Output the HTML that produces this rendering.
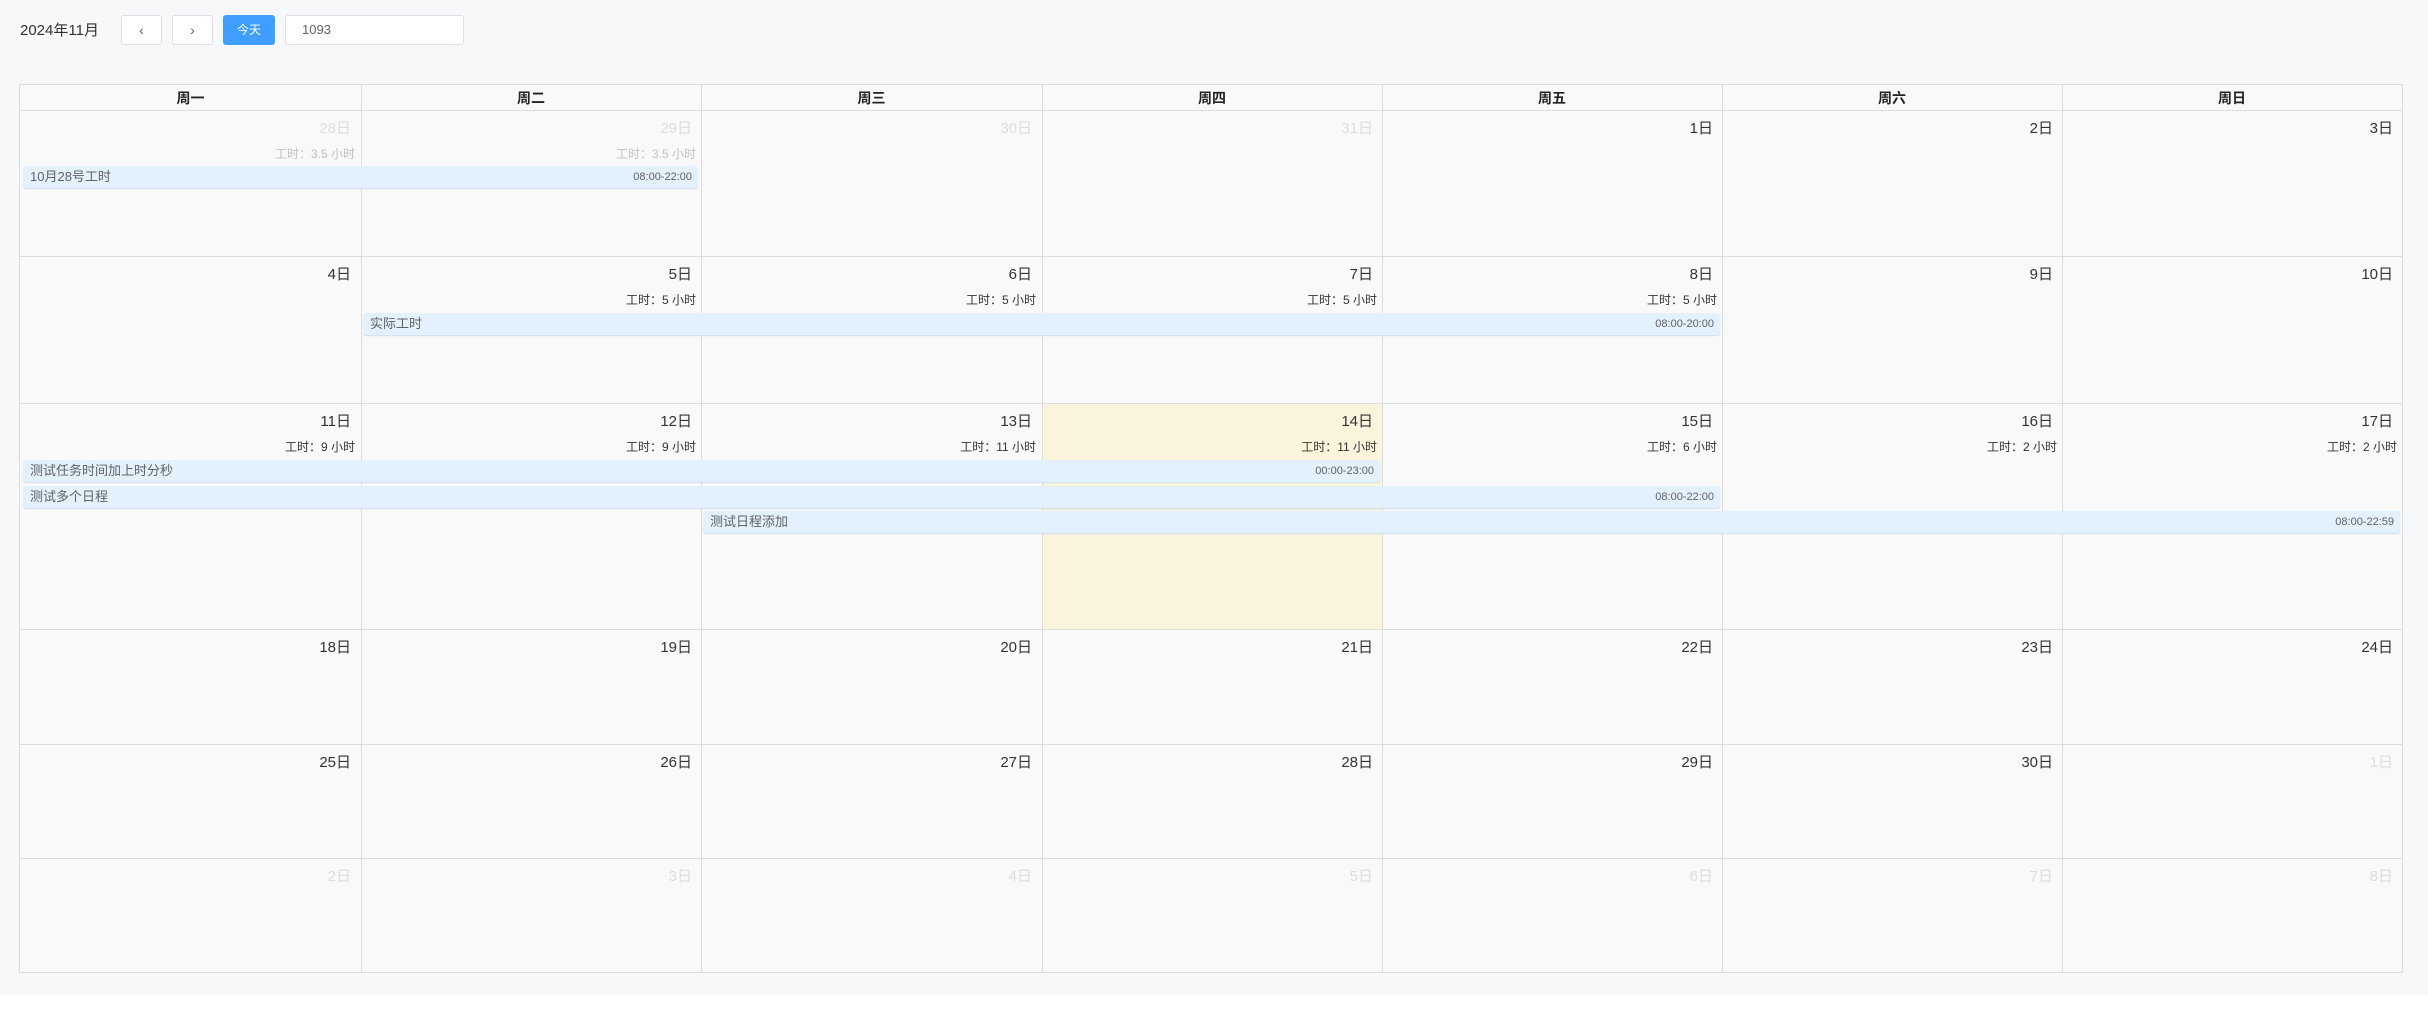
<!DOCTYPE html>
<html><head><meta charset="utf-8"><style>
*{margin:0;padding:0;box-sizing:border-box}
body{width:2428px;height:1017px;background:#fff;font-family:"Liberation Sans","Noto Sans CJK SC",sans-serif;position:relative;overflow:hidden}
#bg{position:absolute;left:0;top:0;width:2428px;height:995px;background:#f7f8fa}
.t{position:absolute;left:20px;top:19px;font-size:15px;color:#303133}
.btn{position:absolute;top:15px;height:30px;border:1px solid #dcdfe6;border-radius:3px;background:#fff;color:#606266;font-size:14px;text-align:center;line-height:28px}
.grid{position:absolute;left:19px;top:84px;width:2384px;height:889px;border:1px solid #dcdcdc;background:#f9f9f9}
.vl{position:absolute;top:0;width:1px;height:100%;background:#dcdcdc}
.hl{position:absolute;left:0;height:1px;width:100%;background:#dcdcdc}
.hd{position:absolute;top:0;height:26px;line-height:26px;text-align:center;font-size:14px;font-weight:bold;color:#222}
.d{position:absolute;font-size:15px;color:#333;text-align:right;width:330px}
.g{color:#ddd}
.w{position:absolute;font-size:12px;color:#333;text-align:right;width:330px}
.wg{color:#c0c0c0}
.ev{position:absolute;height:22px;background:#e3f0fd;border-radius:3px;box-shadow:0 1px 1px #cfdcee;font-size:13px;color:#606266;line-height:22px;padding:0 7px}
.ev span{position:absolute;right:6px;top:0;font-size:11px}
</style></head><body>
<div id="bg"></div>
<div class="t">2024年11月</div>
<div class="btn" style="left:121px;width:41px">‹</div>
<div class="btn" style="left:172px;width:41px">›</div>
<div class="btn" style="left:223px;width:52px;background:#409eff;border-color:#409eff;color:#fff;font-size:12px">今天</div>
<div class="btn" style="left:285px;width:179px;text-align:left;padding-left:16px;font-size:13px">1093</div>
<div class="grid">
<div style="position:absolute;left:1022px;top:318px;width:340px;height:226px;background:#faf4dc"></div>
<div class="hl" style="top:25px"></div>
<div class="hl" style="top:171px"></div>
<div class="hl" style="top:318px"></div>
<div class="hl" style="top:544px"></div>
<div class="hl" style="top:659px"></div>
<div class="hl" style="top:773px"></div>
<div class="vl" style="left:341px"></div>
<div class="vl" style="left:681px"></div>
<div class="vl" style="left:1022px"></div>
<div class="vl" style="left:1362px"></div>
<div class="vl" style="left:1702px"></div>
<div class="vl" style="left:2042px"></div>
<div class="hd" style="left:0;width:341px">周一</div>
<div class="hd" style="left:341px;width:340px">周二</div>
<div class="hd" style="left:681px;width:341px">周三</div>
<div class="hd" style="left:1022px;width:340px">周四</div>
<div class="hd" style="left:1362px;width:340px">周五</div>
<div class="hd" style="left:1702px;width:340px">周六</div>
<div class="hd" style="left:2042px;width:340px">周日</div>
<div id="cells"></div>
<div class="ev" style="left:3px;top:81px;width:675px">10月28号工时<span>08:00-22:00</span></div>
<div class="ev" style="left:343px;top:228px;width:1357px">实际工时<span>08:00-20:00</span></div>
<div class="ev" style="left:3px;top:375px;width:1357px">测试任务时间加上时分秒<span>00:00-23:00</span></div>
<div class="ev" style="left:3px;top:401px;width:1697px">测试多个日程<span>08:00-22:00</span></div>
<div class="ev" style="left:683px;top:426px;width:1697px">测试日程添加<span>08:00-22:59</span></div>
</div>
<script>
var rows=[25,171,318,544,659,773],cols=[0,341,681,1022,1362,1702,2042];
var d=[["28日g","29日g","30日g","31日g","1日","2日","3日"],["4日","5日","6日","7日","8日","9日","10日"],["11日","12日","13日","14日","15日","16日","17日"],["18日","19日","20日","21日","22日","23日","24日"],["25日","26日","27日","28日","29日","30日","1日g"],["2日g","3日g","4日g","5日g","6日g","7日g","8日g"]];
var w=[["工时：3.5 小时g","工时：3.5 小时g"],[null,"工时：5 小时","工时：5 小时","工时：5 小时","工时：5 小时"],["工时：9 小时","工时：9 小时","工时：11 小时","工时：11 小时","工时：6 小时","工时：2 小时","工时：2 小时"]];
var h="";
for(var r=0;r<6;r++)for(var c=0;c<7;c++){var s=d[r][c],g=s.slice(-1)=="g";if(g)s=s.slice(0,-1);
h+='<div class="d'+(g?' g':'')+'" style="left:'+(cols[c]+1)+'px;top:'+(rows[r]+7)+'px">'+s+'</div>';
if(w[r]&&w[r][c]){var t=w[r][c],gg=t.slice(-1)=="g";if(gg)t=t.slice(0,-1);
h+='<div class="w'+(gg?' wg':'')+'" style="left:'+(cols[c]+5)+'px;top:'+(rows[r]+35)+'px">'+t+'</div>';}}
document.getElementById("cells").innerHTML=h;
</script>
</body></html>
